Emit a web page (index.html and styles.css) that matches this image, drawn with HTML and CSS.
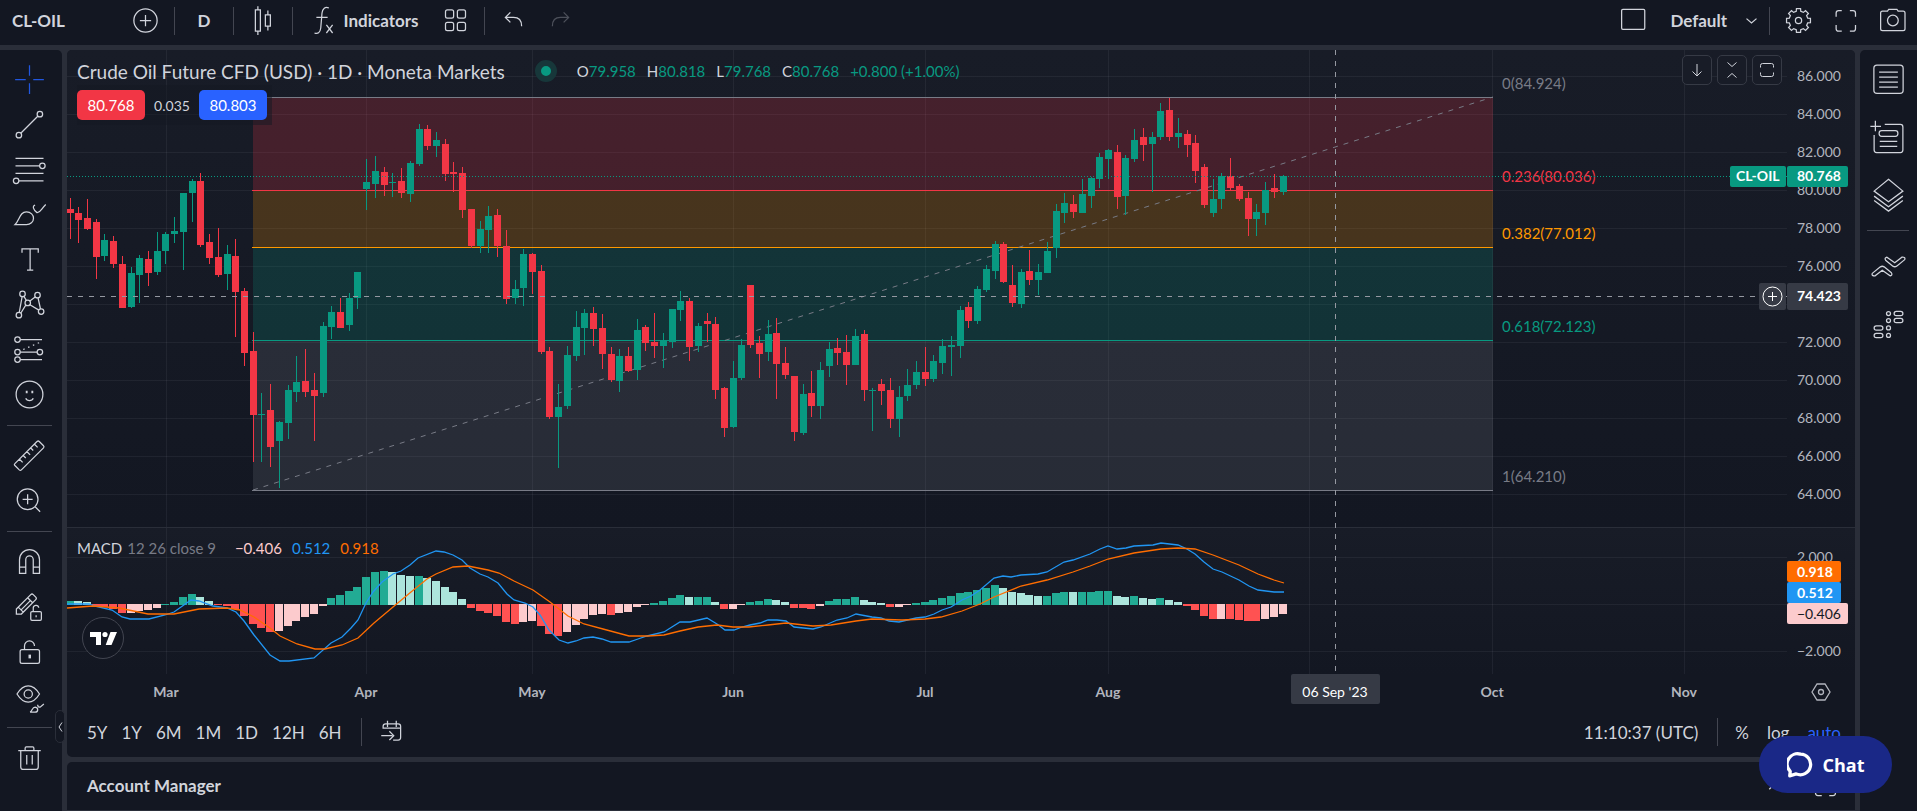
FILE: index.html
```html
<!DOCTYPE html>
<html lang="en">
  <head>
    <meta charset="UTF-8" />
    <meta name="viewport" content="width=device-width, initial-scale=1" />
    <title>CL-OIL 80.768</title>
    <link rel="stylesheet" href="styles.css">
  </head>
  <body>
    <header class="topbar">
      <button class="symbol">CL-OIL</button>
      <button class="tool wide" aria-label="Compare">
        <svg class="icon" viewBox="0 0 28 28"><circle cx="14" cy="14" r="9.3"/><path d="M14 9.5v9M9.5 14h9"/></svg>
      </button>
      <span class="divider"></span>
      <button class="tool wide">D</button>
      <span class="divider"></span>
      <button class="tool wide" aria-label="Candles">
        <svg class="icon" viewBox="0 0 28 28"><path d="M7.500 5.500h4v17h-4zM9.500 2.500v3M9.500 22.500v3M15.500 9.500h4v9h-4zM17.500 6v3.500M17.500 18.500v3.500"/></svg>
      </button>
      <span class="divider"></span>
      <button class="tool indicators">
        <svg class="icon" viewBox="0 0 28 28"><path d="M17.500 4c-3-1.500-5 .5-5.500 4L11 20c-.5 4-2.500 5-5 4M7.500 11.500h9M15.500 17.500l5 6.500M20.500 17.500l-5 6.500"/></svg>
        Indicators
      </button>
      <button class="tool" aria-label="Templates">
        <svg class="icon" viewBox="0 0 28 28"><rect x="6" y="5.500" width="6.500" height="6.500" rx="1.500"/><rect x="15.500" y="5.500" width="6.500" height="6.500" rx="1.500"/><rect x="6" y="15.500" width="6.500" height="6.500" rx="1.500"/><rect x="15.500" y="15.500" width="6.500" height="6.500" rx="1.500"/></svg>
      </button>
      <span class="divider after-grid"></span>
      <button class="tool" aria-label="Undo">
        <svg class="icon" viewBox="0 0 28 28"><path d="M11.500 7.500l-4 4 4 4M7.500 11.500h6.500c4 0 6.500 2.500 6.500 7"/></svg>
      </button>
      <button class="tool faded" aria-label="Redo">
        <svg class="icon" viewBox="0 0 28 28"><path d="M16.500 7.500l4 4-4 4M20.500 11.500H14c-4 0-6.500 2.500-6.500 7"/></svg>
      </button>
      <div class="topbar-right">
        <button class="tool" aria-label="Layout">
          <svg class="icon" viewBox="0 0 28 28"><rect x="4.500" y="5" width="18.500" height="16" rx="1"/></svg>
        </button>
        <button class="tool layout-name">Default
          <svg class="icon" viewBox="0 0 28 28"><path d="M10 12.500l4 3.500 4-3.500"/></svg>
        </button>
        <span class="divider"></span>
        <button class="tool" aria-label="Settings">
          <svg class="icon" viewBox="0 0 28 28"><path id="gear" d=""/><circle cx="14" cy="14" r="2.500"/></svg>
        </button>
        <button class="tool" aria-label="Fullscreen">
          <svg class="icon" viewBox="0 0 28 28"><path d="M6.500 11V8q0-2 2-2h2.500M17.500 6H20q2 0 2 2v3M22 17.500v3q0 2-2 2h-2.500M11 22.500H8.500q-2 0-2-2v-3"/></svg>
        </button>
        <button class="tool" aria-label="Snapshot">
          <svg class="icon" viewBox="0 0 28 28"><path d="M6 6.500h4l1-1.500h6.500l1 1.500h4q1.500 0 1.500 1.500v12.500q0 1.500-1.500 1.500H6q-1.500 0-1.500-1.500V8Q4.500 6.500 6 6.500z"/><circle cx="14.300" cy="14" r="4.300"/></svg>
        </button>
      </div>
    </header>

    <main class="workspace">
      <nav class="drawing-bar">
        <button class="draw active" aria-label="Cross">
          <svg class="icon" viewBox="0 0 28 28"><path d="M14 2.500v8.500M14 17v8.500M2.500 14h8.500M17 14h8.500"/></svg>
        </button>
        <button class="draw" aria-label="Trend line">
          <svg class="icon" viewBox="0 0 28 28"><path d="M7 21L20.800 7.200"/><circle cx="5.500" cy="22.500" r="2.200"/><circle cx="22.300" cy="5.700" r="2.200"/></svg>
        </button>
        <button class="draw" aria-label="Fib retracement">
          <svg class="icon" viewBox="0 0 28 28"><path d="M2.800 5h22.400M2.800 11h19.500M2.800 17h22.400M5.500 23h19.700"/><circle cx="24.300" cy="11" r="2.200"/><circle cx="3.300" cy="23" r="2.200"/></svg>
        </button>
        <button class="draw" aria-label="Brush">
          <svg class="icon" viewBox="0 0 28 28"><path d="M2.500 22C6 19 6 11.900 11.600 11.900c3.500 0 5.600 2.500 5.600 5 0 3-2.500 5.100-5.600 5.100zM18.500 6.500c-2.500.5-1.500 4 1.500 6 2.500.5 3-2.500 7-6.500"/></svg>
        </button>
        <button class="draw" aria-label="Text">
          <svg class="icon" viewBox="0 0 28 28"><path d="M8 8.500v-3h13v3M14.500 5.500v17M12 22.500h5"/></svg>
        </button>
        <button class="draw" aria-label="Patterns">
          <svg class="icon" viewBox="0 0 28 28"><path d="M5.800 20.400l2.300-12.700M9.400 7.300l2.200 3.600M14 11.300l4.800-3.600M20.800 8.600l2 9M7 21l4-6.500M14 14l7.500 4.500"/><circle cx="8.400" cy="5.500" r="2.200"/><circle cx="20.400" cy="6.500" r="2.200"/><circle cx="12.600" cy="12.700" r="2.200"/><circle cx="5.500" cy="22.500" r="2.200"/><circle cx="23.300" cy="19.600" r="2.200"/></svg>
        </button>
        <button class="draw" aria-label="Prediction">
          <svg class="icon" viewBox="0 0 28 28"><path d="M6.600 6h17.400M6.600 16h13.500M6.600 22h17.400"/><path d="M9 14l14-6" stroke-dasharray="1.200 3"/><circle cx="4.400" cy="6" r="2.200"/><circle cx="4.400" cy="16" r="2.200"/><circle cx="4.400" cy="22" r="2.200"/><circle cx="22.300" cy="16" r="2.200"/></svg>
        </button>
        <button class="draw" aria-label="Emoji">
          <svg class="icon" viewBox="0 0 28 28"><circle cx="14" cy="14" r="10.700"/><path d="M11 17c1 2.500 5 2.500 6 0"/><path d="M11 12h1.500M15.500 12H17" stroke-width="2"/></svg>
        </button>
        <hr class="draw-line">
        <button class="draw" aria-label="Measure">
          <svg class="icon" viewBox="0 0 28 28"><path d="M2.300 20.500L20 2.800q1-.8 1.800 0L25.200 6.200q.8.800 0 1.700L7.500 25.500q-.8.800-1.700 0L2.300 22q-.8-.8 0-1.500zM6 17l2.500 2.500M9 14l2 2M12 11l2.500 2.500M15 8l2 2M18 5l2.500 2.500"/></svg>
        </button>
        <button class="draw" aria-label="Zoom in">
          <svg class="icon" viewBox="0 0 28 28"><circle cx="12.500" cy="13" r="8.300"/><path d="M12.500 9v8M8.500 13h8M18.500 19l4 4"/></svg>
        </button>
        <hr class="draw-line">
        <button class="draw" aria-label="Magnet">
          <svg class="icon" viewBox="0 0 28 28"><path d="M6 23.500V12.500a8 8 0 0 1 16 0v11h-5v-11a3 3 0 0 0-6 0v11zM6 18.500h5M17 18.500h5"/></svg>
        </button>
        <button class="draw" aria-label="Keep drawing">
          <svg class="icon" viewBox="0 0 28 28"><path d="M3.500 16L15 4.500q1-1 2 0l2 2q1 1 0 2L7.500 20H3.500zM5 14.500L9 18.500M12.500 7l4 4M7.500 16.500l7-7"/><rect x="15" y="18" width="8.500" height="7" rx="1"/><path d="M17 18v-2.500a2.200 2.200 0 0 1 4.400-.5M19.300 21v1.500"/></svg>
        </button>
        <button class="draw" aria-label="Lock all">
          <svg class="icon" viewBox="0 0 28 28"><rect x="6.500" y="12.500" width="15.500" height="11" rx="1.500"/><path d="M10 12.500V9.500a4 4 0 0 1 8 0"/><path d="M14.200 16.500v3" stroke-width="2"/></svg>
        </button>
        <button class="draw" aria-label="Hide all">
          <svg class="icon" viewBox="0 0 28 28"><path d="M4 12Q8 5.500 13 5.500T22 12Q18 18.500 13 18.500T4 12z"/><circle cx="13" cy="12" r="3.300"/><path d="M14.500 26.500c2-1 1.500-4 4-4 3 .5 2.500 4 0 4zM20.500 20.500q0 2 2 2l3-2.500"/></svg>
        </button>
        <hr class="draw-line">
        <button class="draw" aria-label="Remove">
          <svg class="icon" viewBox="0 0 28 28"><path d="M5 8.500h18M7 8.500v13q0 2 2 2h10q2 0 2-2v-13M10.500 8.500V6.500q0-1 1-1h5q1 0 1 1v2M11.800 12v7.500M16.200 12v7.500"/></svg>
        </button>
        <button class="collapse" aria-label="Hide toolbar">
          <svg viewBox="0 0 8 12"><path d="M6 1.500L3 6l3 4.500"/></svg>
        </button>
      </nav>

      <section class="center">
        <div class="chart-card">
          <div class="chart" id="chart">
            <svg class="plot" id="plot"></svg>
            <div class="legend">
              <div class="legend-row">
                <h1 class="legend-title">Crude Oil Future CFD (USD) · 1D · Moneta Markets</h1>
                <span class="status"></span>
                <p class="ohlc">
                  <span>O<b>79.958</b></span>
                  <span>H<b>80.818</b></span>
                  <span>L<b>79.768</b></span>
                  <span>C<b>80.768</b></span>
                  <b>+0.800 (+1.00%)</b>
                </p>
              </div>
              <div class="trade">
                <button class="quote sell">80.768</button>
                <span class="spread">0.035</span>
                <button class="quote buy">80.803</button>
              </div>
            </div>
            <p class="macd-legend">
              <span>MACD</span> <span class="muted">12 26 close 9</span>
              <span class="macd-values"><i class="v-hist">−0.406</i><i class="v-macd">0.512</i><i class="v-signal">0.918</i></span>
            </p>
            <div class="pane-buttons">
              <button aria-label="Move pane down"><svg viewBox="0 0 20 20"><path d="M10 4v12M5.500 11.500L10 16l4.500-4.500"/></svg></button>
              <button aria-label="Collapse pane"><svg viewBox="0 0 20 20"><path d="M5.500 2.500L10 6.500l4.500-4M5.500 17.500L10 13.500l4.500 4"/></svg></button>
              <button aria-label="Maximize pane"><svg viewBox="0 0 20 20"><path d="M3.500 7.500V5.500q0-2 2-2h9q2 0 2 2v2M3.500 12.500v2q0 2 2 2h9q2 0 2-2v-2"/></svg></button>
            </div>
            <a class="tv-logo" href="#" aria-label="TradingView">
              <svg viewBox="0 0 42 42"><circle cx="21" cy="21" r="20.500"/><path d="M8 15h11v13h-5v-8H8zM28.500 15h6.500l-5.500 13h-5.800z"/><circle class="dot" cx="23" cy="17.500" r="2.600"/></svg>
            </a>
          </div>
          <div class="range-bar">
            <button>5Y</button>
            <button>1Y</button>
            <button>6M</button>
            <button>1M</button>
            <button>1D</button>
            <button>12H</button>
            <button>6H</button>
            <span class="divider"></span>
            <button class="goto" aria-label="Go to">
              <svg class="icon" viewBox="0 0 28 28"><path d="M6.500 11v-2q0-2 2-2h10q2 0 2 2v9q0 2-2 2h-4M6.500 10.500h14M10 4.500v5M17 4.500v5M5 16.500h9M11.500 13l3.500 3.500-3.500 3.500"/></svg>
            </button>
            <div class="range-right">
              <button>11:10:37 (UTC)</button>
              <span class="divider"></span>
              <button>%</button>
              <button>log</button>
              <button class="on">auto</button>
            </div>
          </div>
        </div>
        <div class="account">
          <button>Account Manager</button>
          <div class="account-tools">
            <button aria-label="Open panel"><svg class="icon" viewBox="0 0 28 28"><path d="M9 17l5-5 5 5"/></svg></button>
            <button aria-label="Maximize panel"><svg class="icon" viewBox="0 0 28 28"><path d="M6 11V8q0-2 2-2h3M17 6h3q2 0 2 2v3M22 17v3q0 2-2 2h-3M11 22H8q-2 0-2-2v-3"/></svg></button>
          </div>
        </div>
      </section>

      <nav class="side-bar">
        <button class="side" aria-label="Watchlist">
          <svg class="icon" viewBox="0 0 28 28"><rect x="2.300" y="2.500" width="23.400" height="22.500" rx="2.500"/><path d="M6.500 8h15M6.500 12h15M6.500 16h15M6.500 20h15"/></svg>
        </button>
        <button class="side" aria-label="Object details">
          <svg class="icon" viewBox="0 0 28 28"><path d="M11 3.500h12.500q2 0 2 2V24q0 2-2 2h-19q-2 0-2-2V12M-.5 5h8.500M3.500.5v8.500M7 17h14M7 21h14"/><rect x="6.500" y="8.500" width="15" height="4.500" rx="2"/></svg>
        </button>
        <button class="side" aria-label="Object tree">
          <svg class="icon" viewBox="0 0 28 28"><path d="M14 1l11.500 9.500L14 19 2.500 10.500zM2.500 14.500L14 23l11.500-8.500M2.500 18L14 26.500 25.500 18"/></svg>
        </button>
        <hr class="side-line">
        <button class="side" aria-label="Trading">
          <svg class="icon" viewBox="0 0 28 28"><path d="M1 19.500l6.500-5.200q1.500-1 3 0l5.800 4.700q1.200 1.800-1 2.500l-6.300-4.500L3 21.600Q.2 21.500 1 19.500zM27 8.500l-6.500 5.200q-1.500 1-3 0L11.700 9q-1.200-1.800 1-2.500l6.300 4.500L25 6.400q2.800.1 2 2.100z"/></svg>
        </button>
        <button class="side" aria-label="Depth of market">
          <svg class="icon" viewBox="0 0 28 28"><rect x="18.500" y="3.500" width="7" height="3.400" rx="1.700"/><rect x="18.500" y="9" width="7" height="3.400" rx="1.700"/><rect x="2.500" y="15" width="7" height="3.400" rx="1.700"/><rect x="2.500" y="21" width="7" height="3.400" rx="1.700"/><circle cx="14" cy="5.200" r="1.600"/><circle cx="14" cy="10.800" r="1.600"/><circle cx="14" cy="16.700" r="1.600"/><circle cx="14" cy="22.700" r="1.600"/></svg>
        </button>
      </nav>
    </main>

    <button class="chat">
      <svg viewBox="0 0 24 24"><path d="M12.500 2a9.500 9.500 0 1 1-4 18.200L2.500 22l.5-4.200A9.500 9.500 0 0 1 12.500 2z"/></svg>
      Chat
    </button>
    <script src="chart.js"></script>
  </body>
</html>
```

FILE: styles.css
```css
* {
  box-sizing: border-box;
}
body {
  margin: 0;
  min-height: 100vh;
  display: flex;
  flex-direction: column;
  gap: 5px;
  background-color: #2a2e39;
  color: #d1d4dc;
  font-family: Lato, "Liberation Sans", sans-serif;
  font-size: 17px;
  overflow: hidden;
}
button {
  padding: 0;
  border: none;
  background: none;
  color: inherit;
  font: inherit;
  cursor: pointer;
}
svg {
  display: block;
  fill: none;
  stroke: currentColor;
}
p,
h1 {
  margin: 0;
}
.icon {
  width: 35px;
  height: 35px;
  flex-shrink: 0;
  overflow: visible;
}

/* Top bar */
.topbar {
  height: 45px;
  padding-bottom: 4px;
  display: flex;
  align-items: center;
  background-color: #131722;
  font-weight: 700;
}
.symbol {
  width: 116px;
  padding-left: 12px;
  text-align: left;
}
.tool {
  width: 47px;
  height: 40px;
  display: flex;
  align-items: center;
  justify-content: center;
}
.wide {
  width: 58px;
}
.indicators {
  width: 139px;
  gap: 2px;
}
.faded {
  opacity: 0.3;
}
.divider {
  width: 1px;
  height: 28px;
  background-color: #434651;
}
.after-grid {
  margin: 0 5px;
}
.topbar-right {
  margin-left: auto;
  padding-right: 1px;
  display: flex;
  align-items: center;
}
.topbar-right .divider {
  margin-right: 5px;
}
.layout-name {
  width: 112px;
  gap: 7px;
  justify-content: flex-end;
}

/* Panels */
.workspace {
  flex: 1;
  display: flex;
  gap: 5px;
}
.drawing-bar {
  position: relative;
  width: 62px;
  padding: 7px 0 0 7px;
  background-color: #131722;
  border-radius: 0 5px 0 0;
}
.draw {
  width: 45px;
  height: 45px;
  display: flex;
  align-items: center;
  justify-content: center;
}
.active {
  color: #2157e0;
}
.draw-line,
.side-line {
  height: 1px;
  border: none;
  background-color: #434651;
}
.draw-line {
  width: 45px;
  margin: 8px 0 7px;
}
.collapse {
  position: absolute;
  right: -3px;
  top: 660px;
  width: 10px;
  height: 33px;
  border: 1px solid #2a2e39;
  border-radius: 5px;
  background-color: #131722;
}
.collapse svg {
  width: 8px;
  height: 12px;
}
.center {
  flex: 1;
  min-width: 0;
  display: flex;
  flex-direction: column;
  gap: 5px;
}
.chart-card {
  flex: 1;
  display: flex;
  flex-direction: column;
  background-color: #131722;
  border-radius: 5px;
  overflow: hidden;
}
.chart {
  position: relative;
  flex: 1;
}
.plot {
  position: absolute;
  width: 100%;
  height: 100%;
  stroke: none;
  font-size: 14px;
}

/* Legends over the plot */
.legend {
  position: absolute;
  left: 10px;
  top: 7px;
}
.legend-row {
  height: 28px;
  display: flex;
  align-items: center;
}
.legend-title {
  font-size: 19px;
  font-weight: 400;
}
.status {
  width: 22px;
  height: 22px;
  margin: 0 20px 0 30px;
  border: 6px solid #17373a;
  border-radius: 50%;
  background-color: #089981;
}
.ohlc {
  display: flex;
  gap: 11px;
  font-size: 15px;
}
.ohlc b {
  color: #089981;
  font-weight: 400;
}
.trade {
  width: 195px;
  height: 40px;
  padding: 5px 5px 5px 0;
  display: flex;
  align-items: center;
  justify-content: space-between;
  background-color: rgba(19, 23, 34, 0.5);
}
.quote {
  width: 68px;
  height: 30px;
  border-radius: 5px;
  color: white;
  font-size: 15px;
}
.sell {
  background-color: #f23645;
}
.buy {
  background-color: #2962ff;
}
.spread {
  font-size: 14px;
}
.macd-legend {
  position: absolute;
  left: 10px;
  top: 488px;
  display: flex;
  gap: 5px;
  font-size: 15px;
  line-height: 20px;
}
.muted {
  color: #787b86;
}
.macd-values {
  margin-left: 14px;
  display: flex;
  gap: 10px;
}
.macd-values i {
  font-style: normal;
}
.v-hist {
  color: #fccbcd;
}
.v-macd {
  color: #2196f3;
}
.v-signal {
  color: #ff6d00;
}
.pane-buttons {
  position: absolute;
  right: 73px;
  top: 5px;
  display: flex;
  gap: 5px;
}
.pane-buttons button {
  width: 30px;
  height: 30px;
  display: flex;
  align-items: center;
  justify-content: center;
  border: 1px solid #363a45;
  border-radius: 5px;
  background-color: #181c27;
}
.pane-buttons svg {
  width: 20px;
  height: 20px;
}
.tv-logo {
  position: absolute;
  left: 15px;
  top: 567px;
  width: 42px;
  height: 42px;
  color: #434651;
}
.tv-logo circle {
  fill: #131722;
}
.tv-logo path,
.tv-logo .dot {
  fill: white;
  stroke: none;
}

/* Ranges and scale options */
.range-bar {
  height: 46px;
  padding: 0 7px 4px 13px;
  display: flex;
  align-items: center;
}
.range-bar button {
  height: 35px;
  padding: 0 7px;
}
.range-bar > .divider {
  margin: 0 6px 0 12px;
}
.range-right {
  margin-left: auto;
  display: flex;
  align-items: center;
}
.range-right .divider {
  margin: 0 10px 0 12px;
}
.range-right button + button {
  margin-left: 4px;
}
.range-bar .on {
  color: #2962ff;
}
.account {
  height: 49px;
  padding: 0 12px 2px 20px;
  display: flex;
  align-items: center;
  justify-content: space-between;
  background-color: #131722;
  border-bottom: 1px solid #2a2e39;
  border-radius: 5px 5px 0 0;
  font-weight: 700;
}
.account-tools {
  display: flex;
  gap: 15px;
}
.side-bar {
  width: 57px;
  background-color: #131722;
  border-radius: 5px 0 0 0;
}
.side {
  width: 56px;
  height: 58px;
  display: flex;
  align-items: center;
  justify-content: center;
}
.side-line {
  width: 42px;
  margin: 6px 7px;
}

.chat {
  position: fixed;
  right: 25px;
  bottom: 18px;
  width: 133px;
  height: 57px;
  display: flex;
  align-items: center;
  justify-content: center;
  gap: 10px;
  border-radius: 29px;
  background-color: #1a2887;
  color: white;
  font-family: "Open Sans", sans-serif;
  font-size: 18px;
  font-weight: 700;
}
.chat svg {
  width: 26px;
  height: 26px;
  stroke-width: 3;
  stroke-linejoin: round;
}

/* Plot text */
.axis {
  fill: #b2b5be;
}
.time {
  fill: #b2b5be;
  font-weight: 700;
  text-anchor: middle;
}
.level {
  font-size: 15px;
}
.tag {
  fill: white;
}
.tag-bold {
  fill: white;
  font-weight: 700;
}
.tag-dark {
  fill: #131722;
}
```

FILE: chart.js
```js
const UP = "#089981";
const DOWN = "#f23645";
const STEP = 8.727;
const SCALE_WIDTH = 68;
const TIME_AXIS_TOP = 624;
const PANE_SPLIT = 477;

// direction, high, body top, body bottom, low (plot rows)
const candles = `
r 148 159 163 189|r 157 163 170 193|r 149 168 179 180|r 169 172 207 229|g 184 190 206 211
r 186 191 214 218|r 206 214 258 258|g 217 223 257 258|g 205 208 225 253|r 201 209 223 236
g 182 201 222 225|g 182 184 201 214|g 167 181 184 193|g 143 143 182 220|g 129 131 143 172
r 123 131 195 197|r 184 192 208 214|r 178 207 225 227|g 195 204 224 240|r 189 206 242 287
r 238 241 303 316|r 282 301 365 412|g 343 364 365 412|r 334 360 397 417|g 371 372 391 438
g 335 340 373 389|g 306 332 342 352|r 299 331 342 347|r 323 340 346 391|g 272 276 343 347
g 256 262 277 289|r 248 262 278 278|g 243 248 275 281|g 222 222 248 259|g 109 132 139 160
g 106 121 134 148|r 117 122 135 146|g 123 132 133 147|r 118 131 143 148|g 111 113 144 152
g 74 79 114 116|r 75 79 96 100|g 82 90 96 107|r 89 94 124 131|r 112 122 124 142
r 117 123 160 168|r 159 159 196 198|g 171 179 196 203|g 156 166 180 203|r 159 165 196 207
r 180 196 249 254|g 230 239 248 254|g 199 204 238 256|r 203 204 222 244|r 215 221 302 304
r 297 301 367 369|g 334 357 367 418|g 296 305 356 359|g 261 277 306 311|g 259 263 278 305
r 257 263 279 296|r 264 278 304 319|r 297 304 330 332|g 299 306 331 342|r 297 306 321 322
g 269 280 320 330|r 275 277 293 301|r 263 292 296 308|g 283 291 296 318|g 259 259 292 298
g 241 251 260 271|r 248 251 297 311|g 273 276 296 302|r 263 271 274 292|r 267 274 340 349
r 337 338 378 387|g 311 328 377 378|g 289 295 328 330|r 235 235 295 298|r 286 293 304 328
g 270 284 302 311|r 268 283 314 349|r 297 313 325 329|r 326 326 382 391|g 334 344 383 385
r 321 343 356 367|g 312 320 356 369|g 292 299 316 327|r 288 298 303 315|r 285 302 315 335
g 279 286 315 315|r 280 284 340 351|g 338 340 341 381|r 329 334 341 355|r 328 340 369 378
g 336 347 369 387|g 319 335 346 351|g 311 322 335 339|r 297 322 329 336|g 305 311 329 332
g 289 296 313 324|g 286 295 297 326|g 256 260 296 308|r 252 257 271 278|g 236 239 271 274
g 215 219 240 242|g 191 194 221 229|r 192 194 232 233|r 215 235 253 257|g 219 222 254 258
r 200 221 230 235|g 214 222 230 245|g 192 201 223 223|g 154 161 198 208|g 143 153 163 173
r 145 154 162 168|g 129 144 163 163|g 127 128 146 158|g 103 107 129 138|g 99 100 109 129
r 95 102 147 159|g 105 108 146 165|g 79 90 109 112|r 78 87 95 111|g 82 87 94 142
g 53 61 87 90|r 48 60 87 91|g 68 83 87 98|r 80 84 95 107|r 85 93 121 133
r 114 117 155 158|g 129 149 163 167|g 123 126 149 159|r 108 126 138 140|r 134 136 149 151
r 142 148 169 186|g 154 162 169 186|g 132 140 163 175|r 124 138 142 148|g 125 126 142 145`
  .trim().split(/[|\n]/).map((c) => c.split(" "));

const histogram = [
  4, 3.9, 3, -2, -3, -5, -9, -8.9, -7, -6, -4, 1, 3, 8, 11, 8, 4, -1, -2, -5,
  -12, -20, -24, -28, -27, -22, -17, -13, -10, -2, 7, 10, 14, 18, 28, 33, 34, 33, 30, 29,
  29.1, 27, 24, 18, 13, 6, -4, -7, -9, -12, -18, -20, -18, -17, -22, -30, -32, -28, -21, -15,
  -11, -10, -11, -9, -8, -3, -1, 2, 4, 7, 10, 8, 8.1, 8.2, 3, -5, -4.9, -1, 3, 4,
  6, 5, 3, -4, -4.1, -5, -2, 4, 6, 6.1, 8, 5, 3, 2, -3, -2.9, -1, 2, 3, 5,
  7, 9, 12, 13, 15, 17, 20, 17, 13, 12, 10, 9, 9.1, 12, 13, 12.9, 13, 13.1, 14, 14.1,
  9, 8, 9, 7, 6, 7, 5, 3, -2, -6, -12, -15, -14.9, -15, -16, -17, -17.1, -15, -13, -10,
];

const macdLine = `0,554 22,554 28,556 45,560 55,567 63,569 82,569 98,565 107,562 124,550 132,551 146,556
160,558 169,562 177,571 187,585 203,605 213,611 222,611 247,608 264,593 275,587 284,578 291,570 299,553
306,542 315,532 326,524 334,521 343,515 351,508 369,501 377,502 386,505 395,510 403,518 413,524 421,527
431,533 440,544 447,550 458,553 466,557 473,565 482,580 492,590 501,593 509,591 517,588 526,587 535,589
544,592 562,592 571,589 580,586 597,582 613,572 623,572 640,568 650,574 658,580 667,580 675,577 683,575
693,573 701,570 710,570 719,571 727,577 746,579 754,577 770,570 780,568 789,564 805,567 814,568 822,571
832,572 849,568 858,567 867,564 875,560 884,557 895,550 904,546 913,540 927,528 936,526 944,527 954,525
971,524 980,522 997,512 1006,510 1023,504 1033,499 1041,496 1050,499 1059,498 1067,496 1086,495 1094,493
1111,495 1120,499 1128,504 1137,512 1146,519 1155,522 1172,530 1182,536 1191,540 1207,542 1217,542`;

const signalLine = `0,558 26,556 52,558 81,564 107,564 132,559 160,558 173,560 187,567 203,578 213,586
230,594 248,599 258,599 275,595 291,588 307,573 326,557 344,542 360,529 369,524 386,517 401,516 421,520
432,523 447,531 466,540 483,552 501,566 517,574 536,579 562,586 581,586 597,585 613,581 631,577 650,575
666,577 682,577 701,575 719,573 746,576 764,575 789,571 805,569 835,570 858,569 874,567 895,561 913,554
927,547 954,536 980,530 1006,522 1023,516 1041,509 1067,503 1094,499 1111,498 1128,499 1146,505 1172,515
1191,524 1207,530 1217,533`;

const months = [
  [99, "Mar"], [299, "Apr"], [465, "May"], [666, "Jun"], [858, "Jul"],
  [1041, "Aug"], [1242, ""], [1425, "Oct"], [1617, "Nov"],
];

// row, label, line colour
const fib = [
  [47, "0(84.924)", "#787b86"],
  [140, "0.236(80.036)", "#f23645"],
  [197, "0.382(77.012)", "#ff9800"],
  [290, "0.618(72.123)", "#089981"],
  [440, "1(64.210)", "#787b86"],
];

const barX = (i) => Math.floor(3 + i * STEP);

function rect(x, y, w, h, fill, extra = "") {
  return `<rect x="${x}" y="${y}" width="${w}" height="${h}" fill="${fill}" ${extra}/>`;
}

function text(x, y, label, cls, extra = "") {
  return `<text x="${x}" y="${y}" class="${cls}" ${extra}>${label}</text>`;
}

function histColor(v, prev) {
  if (v >= 0) return v > prev ? "#22ab94" : "#ace5dc";
  return v < prev ? "#ff5252" : "#fccbcd";
}

function drawChart() {
  const plot = document.getElementById("plot");
  const width = document.getElementById("chart").clientWidth;
  const right = width - SCALE_WIDTH;
  const grid = "rgba(240,243,250,0.06)";
  let out = `<defs><linearGradient id="pane" x1="0" y1="0" x2="0" y2="1">
    <stop offset="0" stop-color="#181c27"/><stop offset="1" stop-color="#131722"/></linearGradient></defs>`;

  out += rect(0, 0, width, PANE_SPLIT, "url(#pane)");
  out += rect(0, PANE_SPLIT, width, TIME_AXIS_TOP - PANE_SPLIT, "url(#pane)");

  // grid
  months.forEach(([x]) => (out += rect(x, 0, 1, TIME_AXIS_TOP, grid)));
  for (let y = 26; y <= 444; y += 38) out += rect(0, y, right, 1, grid);
  [507, 554, 601].forEach((y) => (out += rect(0, y, right, 1, grid)));
  out += rect(0, PANE_SPLIT, width, 1, "#2a2e39");

  // fib retracement
  const bands = ["#f23645", "#ff9800", "#089981", "#787b86"];
  bands.forEach((color, i) => {
    out += rect(186, fib[i][0], 1240, fib[i + 1][0] - fib[i][0], color, 'fill-opacity="0.21"');
  });
  fib.forEach(([y, label, color]) => {
    out += rect(185, y, 1241, 1, color);
    out += text(1435, y - 8, label, "level", `fill="${color}"`);
  });
  out += '<path d="M186 440L1426 47" stroke="#787b86" stroke-dasharray="5 6"/>';

  // candles
  candles.forEach(([dir, high, top, bottom, low], i) => {
    const color = dir === "g" ? UP : DOWN;
    out += rect(barX(i), high, 1, low - high, color);
    out += rect(barX(i) - 3, top, 7, bottom - top, color);
  });
  out += `<path d="M0 126.500H${right}" stroke="${UP}" stroke-dasharray="1 2"/>`;

  // macd
  histogram.forEach((v, i) => {
    const h = Math.round(Math.abs(v));
    const y = v >= 0 ? 555 - h : 554;
    out += rect(barX(i) - 4, y, 8, h, histColor(v, i ? histogram[i - 1] : 0));
  });
  out += `<polyline points="${macdLine}" fill="none" stroke="#2196f3" stroke-width="1.300"/>`;
  out += `<polyline points="${signalLine}" fill="none" stroke="#ff6d00" stroke-width="1.300"/>`;

  // crosshair
  out += `<path d="M0 246.500H${right}M1268.500 0V${TIME_AXIS_TOP}" stroke="#9598a1" stroke-dasharray="5 6"/>`;

  // price scale
  for (let p = 86, y = 26; p >= 64; p -= 2, y += 38) {
    if (p !== 74) out += text(right + 10, y + 5, p + ".000", "axis");
  }
  out += text(right + 10, 512, "2.000", "axis");
  out += text(right + 10, 606, "−2.000", "axis");

  out += rect(right - 57, 116, 56, 21, UP, 'rx="2"');
  out += text(right - 51, 131, "CL-OIL", "tag-bold");
  out += rect(right, 116, 61, 21, UP, 'rx="2"');
  out += text(right + 10, 131, "80.768", "tag-bold");

  out += rect(right - 28, 233, 27, 27, "#363a45", 'rx="2"');
  out += `<g fill="none" stroke="white"><circle cx="${right - 14.5}" cy="246.500" r="9.500"/>
    <path d="M${right - 19} 246.500h9M${right - 14.5} 242v9"/></g>`;
  out += rect(right, 233, 61, 27, "#363a45", 'rx="2"');
  out += text(right + 10, 251, "74.423", "tag-bold");

  out += rect(right, 511, 54, 21, "#ff6d00", 'rx="2"');
  out += text(right + 10, 527, "0.918", "tag-bold");
  out += rect(right, 532, 54, 21, "#2196f3", 'rx="2"');
  out += text(right + 10, 548, "0.512", "tag-bold");
  out += rect(right, 553, 61, 21, "#fccbcd", 'rx="2"');
  out += text(right + 10, 569, "−0.406", "tag-dark");

  // time scale
  months.forEach(([x, label]) => (out += text(x, 647, label, "time")));
  out += rect(1224, TIME_AXIS_TOP, 89, 30, "#363a45", 'rx="2"');
  out += text(1268, 647, "06 Sep '23", "tag", 'text-anchor="middle"');
  const cx = right + 34;
  out += `<g fill="none" stroke="#b2b5be" stroke-width="1.300">
    <path d="M${cx - 9} 642l5-8h8l5 8-5 8h-8z"/><circle cx="${cx}" cy="642" r="2.500"/></g>`;

  plot.innerHTML = out;
}

// cog outline with eight teeth
function drawGear() {
  let d = "";
  for (let i = 0; i < 8; i++) {
    [[-0.24, 7.6], [-0.17, 9.7], [0.17, 9.7], [0.24, 7.6]].forEach(([da, r]) => {
      const a = (i * Math.PI) / 4 + da;
      d += (d ? "L" : "M") + (14 + r * Math.sin(a)).toFixed(2) + " " + (14 - r * Math.cos(a)).toFixed(2);
    });
  }
  document.getElementById("gear").setAttribute("d", d + "z");
}

drawGear();
drawChart();
window.addEventListener("resize", drawChart);
```
